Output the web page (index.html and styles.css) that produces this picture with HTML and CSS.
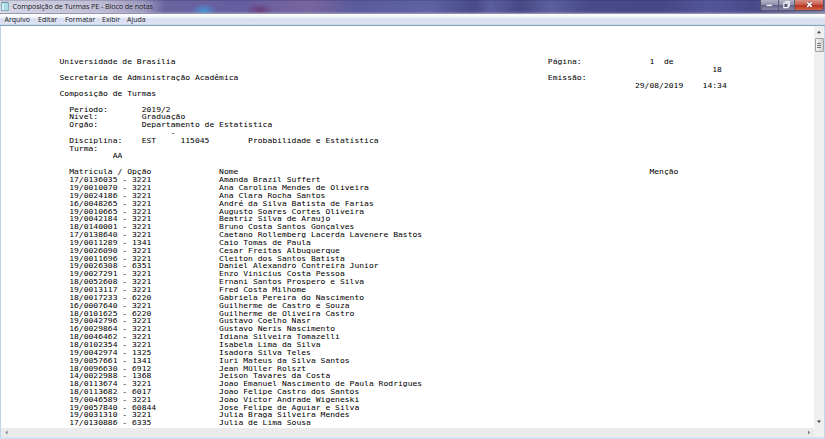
FILE: index.html
```html
<!DOCTYPE html>
<html lang="pt-BR">
<head>
<meta charset="utf-8">
<title>Composição de Turmas PE - Bloco de notas</title>
<link rel="stylesheet" href="styles.css">
</head>
<body>
<div class="window">
  <header class="titlebar">
    <svg class="app-icon" viewBox="0 0 8 10"><path d="M.5 1.5h7v8h-7z" fill="#a9dde6" stroke="#6c9daa" stroke-width=".7"/><path d="M1 1.3h6" stroke="#587581" stroke-dasharray=".8 .6"/><path d="M2 3v6" stroke="#e3f8f8" stroke-width="1.5"/></svg>
    <h1 class="title">Composição de Turmas PE - Bloco de notas</h1>
    <div class="controls">
      <button class="control minimize" aria-label="Minimizar"><svg viewBox="0 0 18 11"><rect x="5.5" y="4.8" width="6.5" height="2.2" rx=".4" fill="#fff" stroke="#55576f" stroke-width=".5"/></svg></button>
      <button class="control restore" aria-label="Restaurar"><svg viewBox="0 0 16 11"><path d="M6.4 1.8h4.7v5H9.8M5 3.4h4.8v5H5z" fill="#686b8b" stroke="#f5f5f8" stroke-width="1.2"/><path d="M6.8 5h1.3v1.8H6.800z" fill="#484b69"/></svg></button>
      <button class="control close" aria-label="Fechar"><svg viewBox="0 0 28 11"><path d="M12 2.500l5 5m0-5-5 5" stroke="#7b4549" stroke-width="3"/><path d="M12 2.500l5 5m0-5-5 5" stroke="#fff" stroke-width="1.800"/></svg></button>
    </div>
  </header>
  <nav class="menubar">
    <span class="m-file">Arquivo</span><span class="m-edit">Editar</span><span class="m-format">Formatar</span><span class="m-view">Exibir</span><span class="m-help">Ajuda</span>
  </nav>
  <main class="editor">
    <div class="page">
<pre class="document">Universidade de Brasília                                                                             Página:              1  de
                                                                                                                                       18
Secretaria de Administração Acadêmica                                                                Emissão:
                                                                                                                       29/08/2019    14:34
Composição de Turmas

  Período:       2019/2
  Nível:         Graduação
  Orgão:         Departamento de Estatística
                       -
  Disciplina:    EST     115045        Probabilidade e Estatística
  Turma:
           AA

  Matrícula / Opção              Nome                                                                                     Menção
  17/0136035 - 3221              Amanda Brazil Suffert
  19/0010070 - 3221              Ana Carolina Mendes de Oliveira
  19/0024186 - 3221              Ana Clara Rocha Santos
  16/0048265 - 3221              André da Silva Batista de Farias
  19/0010665 - 3221              Augusto Soares Cortes Oliveira
  19/0042184 - 3221              Beatriz Silva de Araujo
  18/0140001 - 3221              Bruno Costa Santos Gonçalves
  17/0138640 - 3221              Caetano Rollemberg Lacerda Lavenere Bastos
  19/0011289 - 1341              Caio Tomas de Paula
  19/0026090 - 3221              Cesar Freitas Albuquerque
  19/0011696 - 3221              Cleiton dos Santos Batista
  19/0026308 - 6351              Daniel Alexandro Contreira Junior
  19/0027291 - 3221              Enzo Vinicius Costa Pessoa
  18/0052608 - 3221              Ernani Santos Prospero e Silva
  19/0013117 - 3221              Fred Costa Milhome
  18/0017233 - 6220              Gabriela Pereira do Nascimento
  16/0007640 - 3221              Guilherme de Castro e Souza
  18/0101625 - 6220              Guilherme de Oliveira Castro
  19/0042796 - 3221              Gustavo Coelho Nasr
  16/0029864 - 3221              Gustavo Neris Nascimento
  18/0046462 - 3221              Idiana Silveira Tomazelli
  18/0102354 - 3221              Isabela Lima da Silva
  19/0042974 - 1325              Isadora Silva Teles
  19/0057661 - 1341              Iuri Mateus da Silva Santos
  18/0096630 - 6912              Jean Müller Rolszt
  14/0022988 - 1368              Jeison Tavares da Costa
  18/0113674 - 3221              Joao Emanuel Nascimento de Paula Rodrigues
  18/0113682 - 6017              Joao Felipe Castro dos Santos
  19/0046589 - 3221              Joao Victor Andrade Wigeneski
  19/0057840 - 60844             Jose Felipe de Aguiar e Silva
  19/0031310 - 3221              Julia Braga Silveira Mendes
  17/0130886 - 6335              Julia de Lima Sousa</pre>
    </div>
    <div class="vscroll">
      <svg class="arrow" viewBox="0 0 10 12"><path d="M3 7.300 5 4.800l2 2.500z" fill="#444"/></svg>
      <div class="thumb"><i></i><i></i><i></i></div>
      <svg class="arrow bottom" viewBox="0 0 10 12"><path d="M3 4.500h4L5 7z" fill="#444"/></svg>
    </div>
    <div class="hscroll">
      <svg viewBox="0 0 10 10"><path d="M6.500 2.500v4l-2-2z" fill="#777"/></svg>
      <svg viewBox="0 0 10 10"><path d="M4 2.500v4l2-2z" fill="#777"/></svg>
    </div>
    <div class="corner"></div>
  </main>
</div>
</body>
</html>
```
FILE: styles.css
```css
* { box-sizing: border-box; }
body { margin: 0; overflow: hidden; }
.window {
  width: 825px;
  height: 439px;
  display: grid;
  grid-template-rows: 14px 12px 1fr;
  background: #fff;
}
.titlebar {
  display: flex;
  align-items: flex-start;
  padding-left: 1px;
  border-bottom: 1px solid #9494ac;
  background:
    linear-gradient(#20204066 0, transparent 1px, transparent 11px, #ffffff30 13px),
    radial-gradient(ellipse 13px 8px at 204px 11px, #4794cf, #5581c299 60%, transparent),
    radial-gradient(ellipse 14px 7px at 260px 10px, #693f78, transparent),
    linear-gradient(90deg, #d5d6e5 0, #bdbad3 100px, #9995bd 145px, #6b639f 165px, #655da0 240px, #78659f 310px, #5a5b9d 355px, #5e62a2 430px, #484a8a 475px, #5b5e9f 490px, #484987 520px, #5b5f9d 550px, #484a89 590px, #454786 660px, #54569b 710px, #484989 755px, #77759d 825px);
}
.app-icon { width: 8px; height: 10px; margin-top: 1px; flex: none; }
.title {
  margin: 0 0 0 3.5px;
  font: 400 7.2px/13px "Open Sans", sans-serif;
  letter-spacing: -0.1px;
  color: #15151d;
  white-space: nowrap;
  text-shadow: 0 0 3px #ffffff99;
}
.controls {
  display: flex;
  height: 11px;
  margin-left: auto;
  margin-right: 1px;
  border: 1px solid #555570;
  border-top: 0;
  border-radius: 0 0 3px 3px;
  overflow: hidden;
}
.control {
  height: 10px;
  padding: 0;
  border: 0;
  border-right: 1px solid #5d5d78;
  background: linear-gradient(#b2b2c8, #9191ad 48%, #5f6189 52%, #8788a8);
}
.control svg { display: block; width: 100%; height: 10px; }
.minimize { width: 18px; }
.restore { width: 16px; }
.close { width: 28px; border: 0; background: linear-gradient(#d99384, #c75b4b 48%, #b52f20 52%, #cf6543); }
.menubar {
  display: flex;
  padding-left: 4.5px;
  border-bottom: 1px solid #79a7c5;
  background: linear-gradient(#fff 0, #f3f5fb 3px, #d8def0 5px, #dfe4f4 10px, #c7cad5 11px);
  font: 7px/11px "Open Sans", sans-serif;
  color: #1c1c24;
}
.menubar span { white-space: nowrap; }
.m-file { width: 33.500px; }
.m-edit { width: 27px; }
.m-format { width: 37px; }
.m-view { width: 25px; }
.editor {
  display: grid;
  grid-template-columns: 1fr 10px;
  grid-template-rows: 402px 9px;
  border-left: 1px solid #bfd3eb;
  border-right: 1px solid #bfd9ed;
  border-bottom: 2px solid #d3e2ee;
  min-height: 0;
}
.page { padding: 33px 0 0 58.5px; overflow: hidden; }
/* Flattened glyphs: an 8.92px line box scaled by 0.88 gives a 7.85px line. */
.document {
  margin: 0;
  font: 8.04px/8.92px "DejaVu Sans Mono", monospace;
  color: #000;
  transform: scaleY(0.88);
  transform-origin: 0 0;
}
.vscroll {
  display: flex;
  flex-direction: column;
  align-items: center;
  background: #efefef;
}
.arrow { display: block; width: 10px; height: 12px; }
.arrow.bottom { margin-top: auto; }
.thumb {
  width: 9px;
  height: 14px;
  display: flex;
  flex-direction: column;
  align-items: center;
  justify-content: center;
  gap: 1px;
  border: 1px solid #a2a2a2;
  border-radius: 1px;
  background: linear-gradient(90deg, #f5f5f5, #d0d0d0);
}
.thumb i { width: 4px; height: 1px; background: #777; }
.hscroll { display: flex; justify-content: space-between; background: #ebebeb; }
.hscroll svg { width: 10px; height: 10px; }
.corner { background: #f0f0f0; }
```
